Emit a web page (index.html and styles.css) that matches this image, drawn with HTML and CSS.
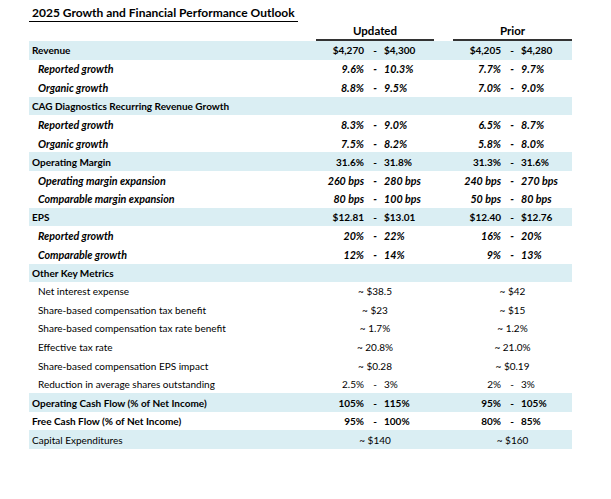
FILE: index.html
```html
<!DOCTYPE html>
<html>
<head>
<meta charset="utf-8">
<link rel="stylesheet" href="styles.css">
</head>
<body>
<div class="page">
  <div class="title">2025 Growth and Financial Performance Outlook</div>
  <div class="row head">
    <div class="hcell upd">Updated</div>
    <div class="hcell pri">Prior</div>
  </div>

  <div class="row band bold"><div class="lab">Revenue</div><div class="l c2">$4,270</div><div class="d c3">-</div><div class="r c4">$4,300</div><div class="l c6">$4,205</div><div class="d c7">-</div><div class="r c8">$4,280</div></div>
  <div class="row sub"><div class="lab">Reported growth</div><div class="l c2">9.6%</div><div class="d c3">-</div><div class="r c4">10.3%</div><div class="l c6">7.7%</div><div class="d c7">-</div><div class="r c8">9.7%</div></div>
  <div class="row sub"><div class="lab">Organic growth</div><div class="l c2">8.8%</div><div class="d c3">-</div><div class="r c4">9.5%</div><div class="l c6">7.0%</div><div class="d c7">-</div><div class="r c8">9.0%</div></div>

  <div class="row band bold"><div class="lab">CAG Diagnostics Recurring Revenue Growth</div></div>
  <div class="row sub"><div class="lab">Reported growth</div><div class="l c2">8.3%</div><div class="d c3">-</div><div class="r c4">9.0%</div><div class="l c6">6.5%</div><div class="d c7">-</div><div class="r c8">8.7%</div></div>
  <div class="row sub"><div class="lab">Organic growth</div><div class="l c2">7.5%</div><div class="d c3">-</div><div class="r c4">8.2%</div><div class="l c6">5.8%</div><div class="d c7">-</div><div class="r c8">8.0%</div></div>

  <div class="row band bold"><div class="lab">Operating Margin</div><div class="l c2">31.6%</div><div class="d c3">-</div><div class="r c4">31.8%</div><div class="l c6">31.3%</div><div class="d c7">-</div><div class="r c8">31.6%</div></div>
  <div class="row sub"><div class="lab">Operating margin expansion</div><div class="l c2">260 bps</div><div class="d c3">-</div><div class="r c4">280 bps</div><div class="l c6">240 bps</div><div class="d c7">-</div><div class="r c8">270 bps</div></div>
  <div class="row sub"><div class="lab">Comparable margin expansion</div><div class="l c2">80 bps</div><div class="d c3">-</div><div class="r c4">100 bps</div><div class="l c6">50 bps</div><div class="d c7">-</div><div class="r c8">80 bps</div></div>

  <div class="row band bold"><div class="lab">EPS</div><div class="l c2">$12.81</div><div class="d c3">-</div><div class="r c4">$13.01</div><div class="l c6">$12.40</div><div class="d c7">-</div><div class="r c8">$12.76</div></div>
  <div class="row sub"><div class="lab">Reported growth</div><div class="l c2">20%</div><div class="d c3">-</div><div class="r c4">22%</div><div class="l c6">16%</div><div class="d c7">-</div><div class="r c8">20%</div></div>
  <div class="row sub"><div class="lab">Comparable growth</div><div class="l c2">12%</div><div class="d c3">-</div><div class="r c4">14%</div><div class="l c6">9%</div><div class="d c7">-</div><div class="r c8">13%</div></div>

  <div class="row band bold"><div class="lab">Other Key Metrics</div></div>
  <div class="row metric"><div class="lab">Net interest expense</div><div class="ap upd">~ $38.5</div><div class="ap pri">~ $42</div></div>
  <div class="row metric"><div class="lab">Share-based compensation tax benefit</div><div class="ap upd">~ $23</div><div class="ap pri">~ $15</div></div>
  <div class="row metric"><div class="lab">Share-based compensation tax rate benefit</div><div class="ap upd">~ 1.7%</div><div class="ap pri">~ 1.2%</div></div>
  <div class="row metric"><div class="lab">Effective tax rate</div><div class="ap upd">~ 20.8%</div><div class="ap pri">~ 21.0%</div></div>
  <div class="row metric"><div class="lab">Share-based compensation EPS impact</div><div class="ap upd">~ $0.28</div><div class="ap pri">~ $0.19</div></div>
  <div class="row metric"><div class="lab">Reduction in average shares outstanding</div><div class="l c2">2.5%</div><div class="d c3">-</div><div class="r c4">3%</div><div class="l c6">2%</div><div class="d c7">-</div><div class="r c8">3%</div></div>

  <div class="row band bold"><div class="lab">Operating Cash Flow (% of Net Income)</div><div class="l c2">105%</div><div class="d c3">-</div><div class="r c4">115%</div><div class="l c6">95%</div><div class="d c7">-</div><div class="r c8">105%</div></div>
  <div class="row bold"><div class="lab">Free Cash Flow (% of Net Income)</div><div class="l c2">95%</div><div class="d c3">-</div><div class="r c4">100%</div><div class="l c6">80%</div><div class="d c7">-</div><div class="r c8">85%</div></div>
  <div class="row band plain"><div class="lab">Capital Expenditures</div><div class="ap upd">~ $140</div><div class="ap pri">~ $160</div></div>
</div>
</body>
</html>
```

FILE: styles.css
```css
html, body {
  margin: 0;
  padding: 0;
  background: #ffffff;
}

body {
  font-family: Lato, "Open Sans", "Liberation Sans", sans-serif;
  color: #000;
  font-size: 10px;
}

.page {
  padding-left: 29px;
  width: 543px;
}

.title {
  width: 266px;
  height: 21px;
  padding-left: 3px;
  border-bottom: 1px solid #000;
  font-size: 12px;
  font-weight: 700;
  line-height: 25px;
  white-space: nowrap;
}

.row {
  display: grid;
  grid-template-columns: 287px 52px 14px 52px 19px 52px 14px 53px;
  height: 18.56px;
  align-items: center;
  white-space: nowrap;
}

.row.head {
  height: 19px;
  align-items: end;
}

.hcell {
  font-size: 11.5px;
  font-weight: 700;
  text-align: center;
  border-bottom: 2px solid #333;
  line-height: 17px;
}

.upd { grid-column: 2 / 5; }
.pri { grid-column: 6 / 9; }

.band { background: #daeef3; }

.lab {
  grid-column: 1;
  padding-left: 3px;
}

.bold { font-weight: 700; }

.sub {
  font-weight: 700;
  font-style: italic;
  font-size: 10.7px;
}
.sub .lab, .metric .lab { padding-left: 9px; }

.l { text-align: right; padding-right: 4px; }
.d { text-align: center; }
.r { text-align: left; padding-left: 2px; }

.c2 { grid-column: 2; }
.c3 { grid-column: 3; }
.c4 { grid-column: 4; }
.c6 { grid-column: 6; }
.c7 { grid-column: 7; }
.c8 { grid-column: 8; }

.ap { text-align: center; }
```
